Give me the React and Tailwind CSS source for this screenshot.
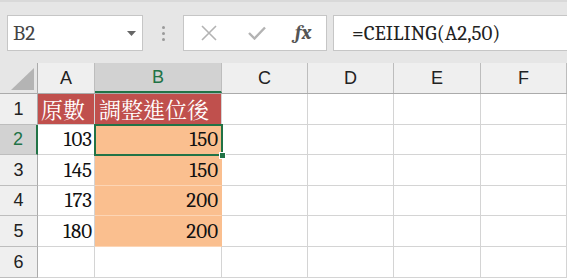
import React from "react";

const cols = [
  { k: "A", w: "w-[57px]" },
  { k: "B", w: "w-[127px]" },
  { k: "C", w: "w-[86px]" },
  { k: "D", w: "w-[86px]" },
  { k: "E", w: "w-[87px]" },
  { k: "F", w: "w-[86px]" },
];

const rows = [
  { n: 1, h: "h-[31px]", a: "原數", b: "調整進位後", head: true },
  { n: 2, h: "h-[30px]", a: "103", b: "150" },
  { n: 3, h: "h-[31px]", a: "145", b: "150" },
  { n: 4, h: "h-[30px]", a: "173", b: "200" },
  { n: 5, h: "h-[31px]", a: "180", b: "200" },
  { n: 6, h: "h-[31px]", a: "", b: "", empty: true },
];

const serif = "font-serif [font-family:'Liberation_Serif',serif]";
const cjk = "[font-family:'Noto_Serif_CJK_TC','Noto_Sans_CJK_TC',serif]";
const sans = "[font-family:'Liberation_Sans',sans-serif]";

export default function App() {
  return (
    <div className="w-[567px] h-[278px] overflow-hidden bg-[#e6e6e6] flex flex-col">
      {/* toolbar */}
      <div className="h-[64px] flex items-start pt-[13px] border-t-2 border-[#d9d9d9]">
        <div className="ml-[7px] w-[136px] h-[36px] bg-white border border-[#c6c6c6] flex items-center justify-between pl-[5px] pr-[6px]">
          <span className={`${serif} text-[21px] text-[#444] leading-none`}>B2</span>
          <svg width="9" height="5" viewBox="0 0 9 5"><path d="M0 0 L9 0 L4.5 5 Z" fill="#666" /></svg>
        </div>
        <div className="w-[40px] h-[36px] flex flex-col items-center justify-center gap-[3px]">
          <span className="w-[3px] h-[3px] bg-[#9a9a9a] rounded-full" />
          <span className="w-[3px] h-[3px] bg-[#9a9a9a] rounded-full" />
          <span className="w-[3px] h-[3px] bg-[#9a9a9a] rounded-full" />
        </div>
        <div className="w-[144px] h-[36px] bg-white border border-[#c6c6c6] flex items-center">
          <svg className="ml-[17px]" width="16" height="16" viewBox="0 0 16 16"><path d="M1 1 L15 15 M15 1 L1 15" stroke="#b3b3b3" strokeWidth="1.6" /></svg>
          <svg className="ml-[31px]" width="18" height="14" viewBox="0 0 18 14"><path d="M1 7 L6.5 12.5 L17 1.5" stroke="#b3b3b3" strokeWidth="2.4" fill="none" /></svg>
          <span className={`ml-[29px] ${serif} italic font-bold text-[20px] text-[#555] leading-none`}>fx</span>
        </div>
        <div className="ml-[6px] flex-1 h-[36px] bg-white border border-[#c6c6c6] border-r-0 flex items-center pl-[18px]">
          <span className={`${serif} text-[21px] text-[#222] leading-none whitespace-nowrap`}>=CEILING(A2,50)</span>
        </div>
      </div>

      {/* sheet */}
      <div className="flex-1 bg-white relative">
        {/* column headers */}
        <div className="flex h-[31px] bg-[#e6e6e6] border-b border-[#ababab]">
          <div className="w-[38px] h-full border-r border-[#ababab] flex items-end justify-end pr-[3px] pb-[3px]">
            <svg width="23" height="22" viewBox="0 0 23 22"><path d="M23 0 L23 22 L0 22 Z" fill="#b4b4b4" /></svg>
          </div>
          {cols.map((c) => (
            <div
              key={c.k}
              className={`${c.w} h-full border-r border-[#bdbdbd] flex items-center justify-center ${sans} text-[18px] ${
                c.k === "B" ? "bg-[#d2d2d2] text-[#217346] border-b-2 border-b-[#217346]" : "bg-[#efefef] text-[#222]"
              }`}
            >
              {c.k}
            </div>
          ))}
        </div>
        {rows.map((r) => (
          <div key={r.n} className={`flex ${r.h}`}>
            <div
              className={`w-[38px] h-full border-b border-[#bdbdbd] flex items-center justify-center ${sans} text-[18px] ${
                r.n === 2 ? "bg-[#d2d2d2] text-[#217346] border-r-2 border-r-[#217346]" : "bg-[#efefef] text-[#222] border-r border-r-[#ababab]"
              }`}
            >
              {r.n}
            </div>
            <div
              className={`w-[57px] h-full border-b border-r border-[#d4d4d4] flex items-center pr-[2px] leading-none ${
                r.head ? "bg-[#c0504d] text-white justify-start pl-[3px]" : "bg-white text-[#111] justify-end"
              }`}
            >
              <span className={r.head ? `${cjk} text-[22px]` : `${serif} text-[21px]`}>{r.a}</span>
            </div>
            <div
              className={`w-[127px] h-full border-b border-r flex items-center leading-none ${
                r.head
                  ? "bg-[#c0504d] text-white justify-start pl-[4px] border-[#d4d4d4]"
                  : r.empty
                  ? "bg-white border-[#d4d4d4]"
                  : "bg-[#fabf8f] text-[#111] justify-end pr-[3px] border-[#fabf8f] border-b-[#fcd5b5]"
              }`}
            >
              <span className={r.head ? `${cjk} text-[22px]` : `${serif} text-[21px]`}>{r.b}</span>
            </div>
            {cols.slice(2).map((c) => (
              <div key={c.k} className={`${c.w} h-full border-b border-r border-[#d4d4d4] bg-white`} />
            ))}
          </div>
        ))}
        {/* selection box B2 */}
        <div className="absolute left-[94px] top-[61px] w-[129px] h-[32px] border-2 border-[#217346] pointer-events-none" />
        <div className="absolute left-[219px] top-[89px] w-[7px] h-[7px] bg-[#217346] border border-white" />
      </div>
    </div>
  );
}
